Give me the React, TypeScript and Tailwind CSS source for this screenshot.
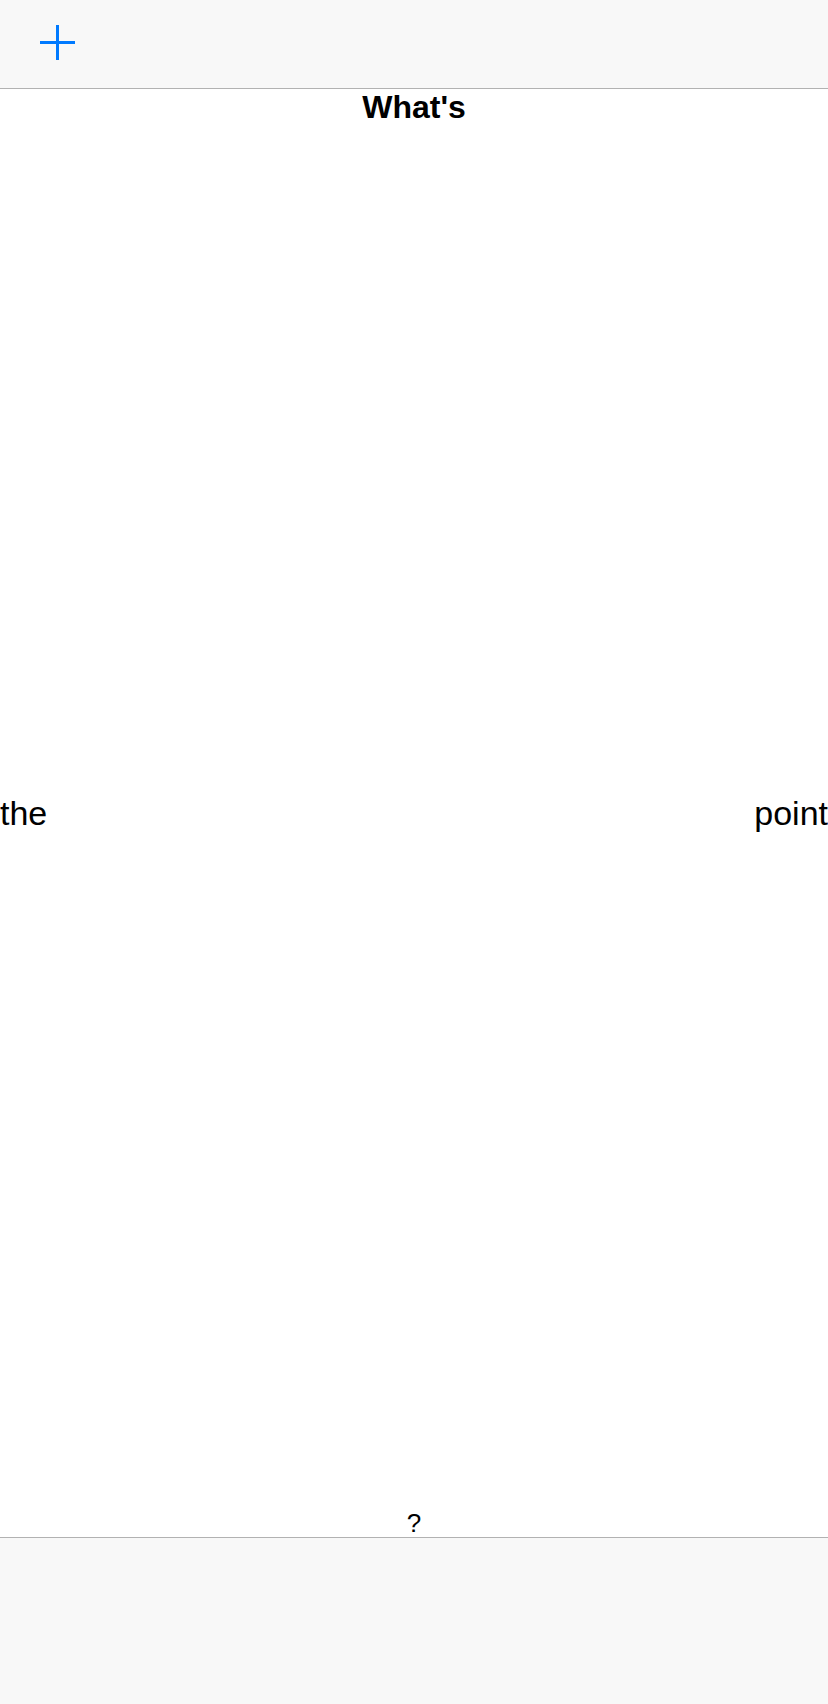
const sans = "font-['Liberation_Sans',Arial,sans-serif]";

function PlusIcon() {
  return (
    <svg width="35" height="35" viewBox="0 0 35 35" className="block">
      <path d="M17.5 0v35M0 17.5h35" stroke="#007aff" strokeWidth="3" fill="none" />
    </svg>
  );
}

export default function App() {
  return (
    <div className={`flex h-[1704px] w-[828px] flex-col bg-white text-black ${sans}`}>
      <header className="h-[89px] shrink-0 border-b border-[#b2b2b2] bg-[#f8f8f8] pl-[40px] pt-[25px]">
        <button type="button" aria-label="Add" className="block">
          <PlusIcon />
        </button>
      </header>

      <main className="flex flex-1 flex-col">
        <h1 className="pt-[2px] text-center text-[32px] font-bold leading-none">What's</h1>
        <div className="flex flex-1 items-center justify-between pb-[8px]">
          <span className="text-[34px] leading-none">the</span>
          <span className="text-[34px] leading-none">point</span>
        </div>
        <p className="pb-[1px] text-center text-[26px] leading-none">?</p>
      </main>

      <footer className="h-[167px] shrink-0 border-t border-[#b2b2b2] bg-[#f8f8f8]" />
    </div>
  );
}
